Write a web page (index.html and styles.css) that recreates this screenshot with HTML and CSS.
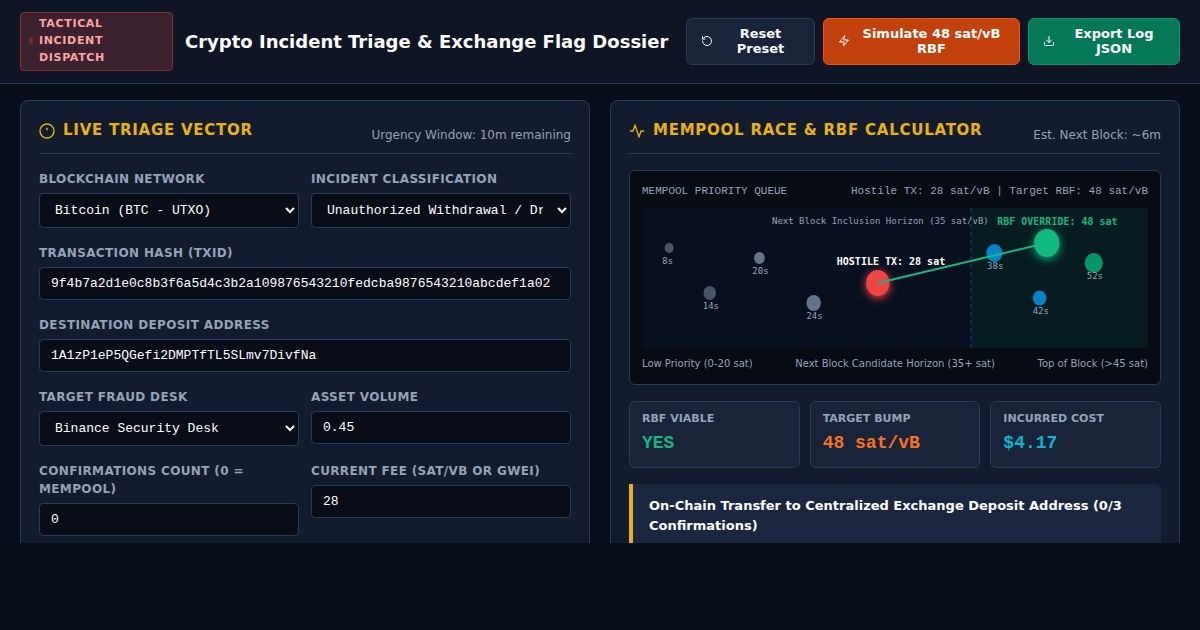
FILE: index.html
```html
<!DOCTYPE html>
<html lang="en">
<head>
<meta charset="utf-8">
<meta name="viewport" content="width=device-width, initial-scale=1">
<title>Crypto Incident Triage &amp; Exchange Flag Dossier</title>
<link rel="stylesheet" href="styles.css">
</head>
<body>
<header class="topbar">
  <div class="badge"><span class="badge-dot"></span><span>Tactical Incident Dispatch</span></div>
  <h1 class="title">Crypto Incident Triage &amp; Exchange Flag Dossier</h1>
  <div class="actions">
    <button type="button" class="btn btn-reset">
      <svg class="btn-icon" viewBox="0 0 24 24"><path d="M3 12a9 9 0 1 0 9-9 9.750 9.750 0 0 0-6.740 2.740L3 8"/><path d="M3 3v5h5"/></svg>
      <span class="btn-text">Reset Preset</span>
    </button>
    <button type="button" class="btn btn-simulate">
      <svg class="btn-icon" viewBox="0 0 24 24"><path d="M13 2 3 14h9l-1 8 10-12h-9l1-8z"/></svg>
      <span class="btn-text">Simulate 48 sat/vB RBF</span>
    </button>
    <button type="button" class="btn btn-export">
      <svg class="btn-icon" viewBox="0 0 24 24"><path d="M21 15v4a2 2 0 0 1-2 2H5a2 2 0 0 1-2-2v-4"/><path d="m7 10 5 5 5-5"/><path d="M12 15V3"/></svg>
      <span class="btn-text">Export Log JSON</span>
    </button>
  </div>
</header>

<main class="workspace">
  <section class="panel">
    <div class="panel-head">
      <h2 class="panel-title">
        <svg class="panel-icon" viewBox="0 0 24 24"><circle cx="12" cy="12" r="10.500"/><path d="M12 8v2"/></svg>
        Live Triage Vector
      </h2>
      <span class="panel-note">Urgency Window: 10m remaining</span>
    </div>
    <form class="form">
      <div class="field">
        <label class="label" for="network">Blockchain Network</label>
        <select class="control select" id="network"><option>Bitcoin (BTC - UTXO)</option></select>
      </div>
      <div class="field">
        <label class="label" for="incident">Incident Classification</label>
        <select class="control select" id="incident"><option>Unauthorized Withdrawal / Drain</option></select>
      </div>
      <div class="field field-wide">
        <label class="label" for="txid">Transaction Hash (TXID)</label>
        <input class="control" id="txid" type="text" value="9f4b7a2d1e0c8b3f6a5d4c3b2a109876543210fedcba9876543210abcdef1a02">
      </div>
      <div class="field field-wide">
        <label class="label" for="address">Destination Deposit Address</label>
        <input class="control" id="address" type="text" value="1A1zP1eP5QGefi2DMPTfTL5SLmv7DivfNa">
      </div>
      <div class="field">
        <label class="label" for="desk">Target Fraud Desk</label>
        <select class="control select" id="desk"><option>Binance Security Desk</option></select>
      </div>
      <div class="field">
        <label class="label" for="volume">Asset Volume</label>
        <input class="control" id="volume" type="text" value="0.45">
      </div>
      <div class="field">
        <label class="label" for="confirmations">Confirmations Count (0 = Mempool)</label>
        <input class="control" id="confirmations" type="text" value="0">
      </div>
      <div class="field">
        <label class="label" for="fee">Current Fee (sat/vB or Gwei)</label>
        <input class="control" id="fee" type="text" value="28">
      </div>
    </form>
  </section>

  <section class="panel">
    <div class="panel-head">
      <h2 class="panel-title">
        <svg class="panel-icon" viewBox="0 0 24 24"><path d="M22 12h-4l-3 9L9 3l-3 9H2"/></svg>
        Mempool Race &amp; RBF Calculator
      </h2>
      <span class="panel-note">Est. Next Block: ~6m</span>
    </div>

    <div class="queue">
      <div class="queue-head">
        <span>MEMPOOL PRIORITY QUEUE</span>
        <span>Hostile TX: 28 sat/vB | Target RBF: 48 sat/vB</span>
      </div>
      <svg class="chart" role="img" aria-label="Mempool priority chart">
        <rect class="zone" x="65%" y="0" width="35%" height="100%"/>
        <line class="horizon" x1="65%" y1="0" x2="65%" y2="100%"/>
        <text class="chart-text" x="25.700%" y="16">Next Block Inclusion Horizon (35 sat/vB)</text>
        <ellipse cx="5.360%" cy="40" rx="4.500" ry="5" fill="#475569"/>
        <ellipse cx="13.390%" cy="85" rx="6.300" ry="7" fill="#475569"/>
        <ellipse cx="23.210%" cy="50" rx="5.400" ry="6" fill="#64748b"/>
        <ellipse cx="33.930%" cy="95" rx="7.200" ry="8" fill="#64748b"/>
        <ellipse cx="69.640%" cy="45" rx="8.100" ry="9" fill="#0284c7"/>
        <ellipse cx="78.570%" cy="90" rx="6.800" ry="7.500" fill="#0284c7"/>
        <ellipse cx="89.290%" cy="55" rx="9" ry="10" fill="#059669"/>
        <g class="chart-text">
          <text x="4%" y="56">8s</text>
          <text x="12%" y="101">14s</text>
          <text x="21.800%" y="66">20s</text>
          <text x="32.500%" y="111">24s</text>
          <text x="68.200%" y="61">38s</text>
          <text x="77.200%" y="106">42s</text>
          <text x="87.900%" y="71">52s</text>
        </g>
        <ellipse class="hostile" cx="46.600%" cy="75" rx="11.700" ry="13"/>
        <line class="bump" x1="46.600%" y1="75" x2="80%" y2="35"/>
        <ellipse class="override" cx="80%" cy="35" rx="12.600" ry="14"/>
        <text class="mark mark-hostile" x="38.500%" y="57">HOSTILE TX: 28 sat</text>
        <text class="mark mark-override" x="70.200%" y="17">RBF OVERRIDE: 48 sat</text>
      </svg>
      <div class="queue-foot">
        <span>Low Priority (0-20 sat)</span>
        <span>Next Block Candidate Horizon (35+ sat)</span>
        <span>Top of Block (&gt;45 sat)</span>
      </div>
    </div>

    <div class="stats">
      <div class="stat"><div class="stat-label">RBF VIABLE</div><div class="stat-value green">YES</div></div>
      <div class="stat"><div class="stat-label">TARGET BUMP</div><div class="stat-value orange">48 sat/vB</div></div>
      <div class="stat"><div class="stat-label">INCURRED COST</div><div class="stat-value cyan">$4.17</div></div>
    </div>

    <div class="alert">
      <h3 class="alert-title">On-Chain Transfer to Centralized Exchange Deposit Address (0/3 Confirmations)</h3>
    </div>
  </section>
</main>
</body>
</html>
```

FILE: styles.css
```css
* {
  box-sizing: border-box;
}

body {
  margin: 0;
  height: 100vh;
  padding-bottom: 87px;
  display: flex;
  flex-direction: column;
  overflow: hidden;
  background: #080e1a;
  color: #f8fafc;
  font-family: "DejaVu Sans", sans-serif;
}

h1, h2, h3 {
  margin: 0;
}

.topbar {
  flex: none;
  display: flex;
  align-items: center;
  gap: 12px;
  padding: 12px 20px;
  background: #0f1525;
  border-bottom: 1px solid #2a3a5c;
}

.badge {
  flex: 0 1 153px;
  display: flex;
  align-items: center;
  gap: 6px;
  padding: 2px 8px 4px;
  border: 1px solid #8a2c38;
  border-radius: 4px;
  background: #3b212e;
  color: #fca5a5;
  font-size: 11px;
  font-weight: 700;
  line-height: 17px;
  letter-spacing: 0.06em;
  text-transform: uppercase;
}

.badge-dot {
  flex: none;
  width: 4px;
  height: 7px;
  border-radius: 50%;
  background: #772935;
  box-shadow: 0 0 6px #5c2433;
}

.title {
  flex: none;
  font-size: 18px;
  line-height: 24px;
  color: #fff;
}

.actions {
  flex: 0 1 494px;
  display: flex;
  gap: 8px;
  margin-left: auto;
}

.btn {
  display: flex;
  align-items: center;
  gap: 8px;
  min-height: 47px;
  padding: 6px 14px 8px;
  border: 1px solid;
  border-radius: 6px;
  color: #fff;
  font-family: inherit;
  font-size: 13px;
  font-weight: 700;
  line-height: 15px;
}

.btn-reset {
  flex: 1 1 129px;
  background: #19243a;
  border-color: #2a3a5c;
  color: #f8fafc;
}

.btn-simulate {
  flex: 1 1 197px;
  background: #c2410c;
  border-color: #ea580c;
}

.btn-export {
  flex: 1 1 152px;
  background: #047857;
  border-color: #059669;
}

.btn-text {
  flex: 1;
}

.btn-icon, .panel-icon {
  flex: none;
  fill: none;
  stroke: currentColor;
  stroke-width: 2;
  stroke-linecap: round;
  stroke-linejoin: round;
}

.btn-icon {
  width: 12px;
  height: 12px;
}

.panel-icon {
  width: 16px;
  height: 16px;
  margin-top: 2px;
}

.workspace {
  flex: 1;
  min-height: 0;
  overflow: hidden;
  display: grid;
  grid-template-columns: 1fr 1fr;
  align-items: start;
  gap: 20px;
  padding: 16px 20px;
}

.panel {
  min-width: 0;
  padding: 18px;
  border: 1px solid #2a3a5c;
  border-radius: 8px;
  background: #131b2e;
}

.panel-head {
  display: flex;
  justify-content: space-between;
  align-items: flex-end;
  margin-bottom: 16px;
  padding-bottom: 12px;
  border-bottom: 1px solid #2a3a5c;
}

.panel-title {
  display: flex;
  align-items: center;
  gap: 8px;
  color: #eab308;
  font-size: 15px;
  line-height: 22px;
  letter-spacing: 0.05em;
  text-transform: uppercase;
}

.panel-note {
  color: #94a3b8;
  font-size: 12px;
  line-height: 12px;
}

.form {
  display: grid;
  grid-template-columns: 1fr 1fr;
  align-items: start;
  gap: 16px 12px;
  padding-bottom: 18px;
}

.field {
  min-width: 0;
  display: flex;
  flex-direction: column;
  gap: 5px;
}

.field-wide {
  grid-column: 1 / -1;
}

.label {
  color: #94a3b8;
  font-size: 12px;
  font-weight: 700;
  line-height: 18px;
  letter-spacing: 0.03em;
  text-transform: uppercase;
}

.control {
  width: 100%;
  height: 33px;
  padding: 0 11px;
  border: 1px solid #2a3a5c;
  border-radius: 4px;
  background: #090d18;
  color: #fff;
  font-family: "Liberation Mono", monospace;
  font-size: 13px;
}

.select {
  height: 35px;
}

.queue {
  padding: 12px;
  border: 1px solid #2a3a5c;
  border-radius: 6px;
  background: #070b14;
  color: #94a3b8;
}

.queue-head, .queue-foot {
  display: flex;
  justify-content: space-between;
}

.queue-head {
  margin-bottom: 8px;
  font-family: "Liberation Mono", monospace;
  font-size: 11px;
  line-height: 17px;
}

.queue-foot {
  margin-top: 8px;
  font-size: 10px;
  line-height: 16px;
}

.chart {
  display: block;
  width: 100%;
  height: 140px;
  border-radius: 4px;
  background: #081020;
  font-family: "DejaVu Sans Mono", monospace;
}

.zone {
  fill: #061c20;
}

.horizon {
  stroke: #172c55;
  stroke-width: 2;
  stroke-dasharray: 4 4;
}

.chart-text {
  fill: #94a3b8;
  font-size: 9px;
}

.hostile {
  fill: #ef4444;
  filter: drop-shadow(0 2px 4px #ef4444);
}

.override {
  fill: #10b981;
  filter: drop-shadow(0 2px 5px #10b981);
}

.bump {
  stroke: #10b981;
  stroke-width: 2;
}

.mark {
  font-size: 10px;
  font-weight: 700;
}

.mark-hostile {
  fill: #fff;
}

.mark-override {
  fill: #10b981;
}

.stats {
  display: grid;
  grid-template-columns: repeat(3, 1fr);
  gap: 10px;
  margin: 16px 0;
}

.stat {
  padding: 8px 12px 10px;
  border: 1px solid #2a3a5c;
  border-radius: 6px;
  background: #19243a;
}

.stat-label {
  color: #94a3b8;
  font-size: 11px;
  font-weight: 700;
  line-height: 17px;
}

.stat-value {
  margin-top: 2px;
  font-family: "Liberation Mono", monospace;
  font-size: 18px;
  font-weight: 700;
  line-height: 28px;
}

.green {
  color: #10b981;
}

.orange {
  color: #f97316;
}

.cyan {
  color: #06b6d4;
}

.alert {
  padding: 12px 16px;
  border-left: 4px solid #eab308;
  border-radius: 0 6px 6px 0;
  background: #1b2740;
}

.alert-title {
  color: #fff;
  font-size: 13px;
  line-height: 20px;
}
```
